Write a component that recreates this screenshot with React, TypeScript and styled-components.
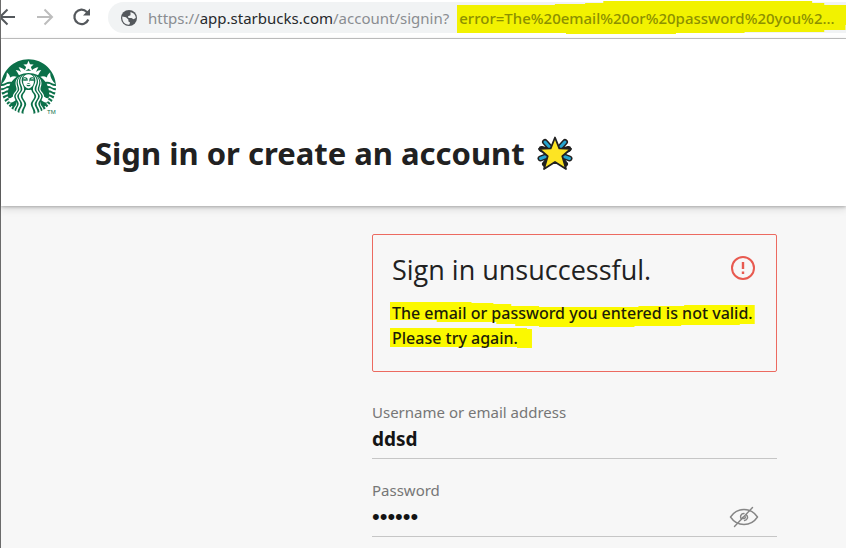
import React, { useId } from 'react';
import styled, { createGlobalStyle } from 'styled-components';
import { SiStarbucks } from 'react-icons/si';

const GlobalStyle = createGlobalStyle`
  *, *::before, *::after { box-sizing: border-box; }
  body {
    margin: 0;
    background: #f7f7f7;
    color: #212121;
    font-family: "Noto Sans", "Open Sans", sans-serif;
    overflow: hidden;
  }
`;

const Page = styled.div`
  min-height: 100vh;
  border-left: 1px solid #6b6b6b;
`;

const BrowserBar = styled.div`
  display: flex;
  align-items: center;
  height: 39px;
  padding-bottom: 5px;
  background: #fff;
  border-bottom: 1px solid #c8c8c8;
  overflow: hidden;
`;

const NavButtons = styled.div`
  display: flex;
  flex: none;
  gap: 14px;
  width: 107px;
`;

const NavButton = styled.button<{ $muted?: boolean }>`
  display: flex;
  flex: none;
  width: 24px;
  height: 24px;
  padding: 0;
  border: 0;
  background: none;
  color: ${(p) => (p.$muted ? '#bdbdbd' : '#54585c')};

  &:first-child { margin-left: -9px; }
`;

const AddressBar = styled.div`
  display: flex;
  flex: 1;
  align-items: center;
  height: 31px;
  margin-top: 2px;
  padding-left: 12px;
  border-radius: 16px 0 0 16px;
  background: #f1f3f4;
  white-space: nowrap;
`;

const GlobeIcon = styled.svg`
  flex: none;
  width: 18px;
  height: 18px;
  margin-right: 10px;
`;

const Url = styled.div`
  display: flex;
  gap: 10px;
  font-size: 15px;
  line-height: 30px;
  color: #8a8d91;
`;

const Host = styled.span`
  color: #26292c;
`;

const Highlight = styled.mark<{ $faded?: boolean }>`
  position: relative;
  isolation: isolate;
  display: inline-block;
  background: none;
  color: ${(p) => (p.$faded ? '#8c9000' : '#1d1d08')};
  font-weight: 500;
`;

const Stroke = styled.svg<{ $top: number; $height: number; $bleed: number }>`
  position: absolute;
  z-index: -1;
  left: -2px;
  top: ${(p) => p.$top}px;
  width: calc(100% + ${(p) => p.$bleed}px);
  height: ${(p) => p.$height}px;
`;

const Header = styled.header`
  position: relative;
  height: 167px;
  padding-top: 20px;
  background: #fff;
  box-shadow: 0 1px 3px rgba(0, 0, 0, 0.25), 0 3px 8px rgba(0, 0, 0, 0.12);
`;

const LogoLink = styled.a`
  display: flex;
  width: 56px;
  height: 56px;
  color: #0b7049;
`;

const Trademark = styled.text`
  font: 6px "Liberation Sans", sans-serif;
`;

const Heading = styled.h1`
  display: flex;
  align-items: center;
  gap: 12px;
  margin: 16px 0 0 94px;
  font-size: 31px;
  line-height: 44px;
  white-space: nowrap;
`;

const StarIcon = styled.svg`
  width: 36px;
  height: 36px;
`;

const SignInForm = styled.form`
  width: 100%;
  max-width: 474px;
  margin-left: auto;
  padding: 28px 69px 0 0;
`;

const Alert = styled.section`
  padding: 16px 18px 20px 19px;
  border: 1px solid #ec6a60;
  border-radius: 2px;
`;

const AlertHeader = styled.div`
  display: flex;
  align-items: flex-start;
  justify-content: space-between;
  height: 38px;
  padding-right: 2px;
`;

const AlertTitle = styled.h2`
  margin: 0;
  font: 400 27px/38px "Open Sans", sans-serif;
`;

const AlertIcon = styled.svg`
  width: 26px;
  height: 26px;
  margin-top: 4px;
`;

const AlertText = styled.p`
  margin: 12px 0 0;
  font-size: 16px;
  line-height: 25px;
  white-space: nowrap;
`;

const Field = styled.div`
  display: flex;
  flex-direction: column;
  height: 58px;
  margin-top: 20px;
  border-bottom: 1px solid #c6c6c6;

  ${Alert} + & { margin-top: 29px; }
`;

const Label = styled.label`
  font-size: 15px;
  line-height: 22px;
  color: #767676;
`;

const FieldRow = styled.div`
  display: flex;
  align-items: center;
  height: 32px;
`;

const TextInput = styled.input`
  flex: 1;
  min-width: 0;
  height: 32px;
  padding: 0;
  border: 0;
  outline: 0;
  background: none;
  color: #141414;
  font: 700 19px/32px "Noto Sans", sans-serif;

  &[type='password'] { font: 400 22px/32px "Liberation Sans", sans-serif; }
`;

const RevealButton = styled.button`
  display: flex;
  margin-right: 18px;
  padding: 0;
  border: 0;
  background: none;
  color: #858585;
`;

function UsernameField() {
  const id = useId();
  return (
    <Field>
      <Label htmlFor={id}>Username or email address</Label>
      <FieldRow>
        <TextInput id={id} type="text" defaultValue="ddsd" />
      </FieldRow>
    </Field>
  );
}

function PasswordField() {
  const id = useId();
  return (
    <Field>
      <Label htmlFor={id}>Password</Label>
      <FieldRow>
        <TextInput id={id} type="password" defaultValue="secret" />
        <RevealButton type="button" aria-label="Show password">
          <svg width="30" height="22" viewBox="0 0 30 22" fill="none" stroke="currentColor" strokeWidth="1.4" strokeLinecap="round">
            <path d="M1.5 11C5 5.8 9.5 3.5 15 3.5S25 5.8 28.5 11C25 16.2 20.5 18.5 15 18.5S5 16.2 1.5 11Z" />
            <path d="M12.500 13.500C10.500 10.500 12 7.500 15 7.500M15.500 14.500C18.500 14 19.500 11 17.500 9M13.500 11.500c.4 1.600 2.600 1.600 3-.5M5.500 20.500 23.500 1.500" />
          </svg>
        </RevealButton>
      </FieldRow>
    </Field>
  );
}

export default function App() {
  return (
    <Page>
      <GlobalStyle />
      <BrowserBar>
        <NavButtons>
          <NavButton type="button" aria-label="Back">
            <svg width="24" height="24" viewBox="0 0 24 24" fill="none" stroke="currentColor" strokeWidth="2">
              <path d="M23 12H8M15.500 4.500 8 12l7.500 7.500" />
            </svg>
          </NavButton>
          <NavButton type="button" aria-label="Forward" $muted>
            <svg width="24" height="24" viewBox="0 0 24 24" fill="none" stroke="currentColor" strokeWidth="2">
              <path d="M7 12h15M14.500 4.500 22 12l-7.500 7.500" />
            </svg>
          </NavButton>
          <NavButton type="button" aria-label="Reload">
            <svg width="24" height="24" viewBox="0 0 24 24" fill="none" stroke="currentColor" strokeWidth="2.200">
              <path d="M20.300 14.500A7.200 7.200 0 1 1 18.800 6.900L20.500 8.800" />
              <path d="M22 3.500v7h-7z" fill="currentColor" stroke="none" />
            </svg>
          </NavButton>
        </NavButtons>
        <AddressBar>
          <GlobeIcon viewBox="0 0 18 18">
            <circle cx="9" cy="9" r="8" fill="#54585c" />
            <path d="M2.300 7.500 6 8.300 8.300 10.500 8.500 12.500 10 13.500 9.500 15.600C4.500 16 1.800 12 2.300 7.500ZM10.500 3l2.800 1.200C15 5.500 15.800 7 15.800 9L13.500 10.300 11.500 9H8.500L8 7.300 10.500 6.300Z" fill="#f1f3f4" />
          </GlobeIcon>
          <Url>
            <span>https://<Host>app.starbucks.com</Host>/account/signin?</span>
            <Highlight $faded>
              <Stroke $top={-2} $height={34} $bleed={16} viewBox="0 0 388 34" preserveAspectRatio="none" aria-hidden="true">
                <path fill="#f2f200" d="M0 4H97V3H127V2H145V0H352V2H364V4H388V24H385V29H364V31H285V32H217V33H108V32H0Z" />
              </Stroke>
              error=The%20email%20or%20password%20you%2...
            </Highlight>
          </Url>
        </AddressBar>
      </BrowserBar>

      <Header>
        <LogoLink href="#" aria-label="Starbucks">
          <svg width="56" height="56" viewBox="0 0 56 56" fill="currentColor">
            <SiStarbucks size={55} />
            <Trademark x="46" y="55">TM</Trademark>
          </svg>
        </LogoLink>
        <Heading>
          Sign in or create an account
          <StarIcon viewBox="0 0 36 36" aria-hidden="true">
            <g strokeLinecap="round">
              <path d="M8 7 28 29M28 7 8 29M3.500 23.500 18 18 32.500 23.500M4.500 14 18 18 31.500 14" fill="none" stroke="#212121" strokeWidth="6" />
              <path d="M8 7 18 18 28 7M3.500 23.500 18 18 32.500 23.500" fill="none" stroke="#25a5d0" strokeWidth="3" />
            </g>
            <path d="M18 2.500 22.300 13.300 34 13.800 25.300 21.300 29 34 18 27 7 34 10.700 21.300 2 13.800 13.700 13.300Z" fill="#fde423" stroke="#212121" strokeWidth="1.800" strokeLinejoin="round" />
          </StarIcon>
        </Heading>
      </Header>

      <SignInForm>
        <Alert role="alert">
          <AlertHeader>
            <AlertTitle>Sign in unsuccessful.</AlertTitle>
            <AlertIcon viewBox="0 0 26 26" fill="none" stroke="#e85a50" strokeWidth="2" aria-hidden="true">
              <circle cx="13" cy="13" r="11" />
              <path d="M13 7v7M13 16.500v2.500" strokeWidth="2.400" />
            </AlertIcon>
          </AlertHeader>
          <AlertText>
            <Highlight>
              <Stroke $top={1} $height={25} $bleed={4} viewBox="0 0 367 25" preserveAspectRatio="none" aria-hidden="true">
                <path fill="#fbf900" d="M0 0H82V1H104V2H122V4H150V5H250V4H296V3H367V22H352V23H293V24H246V25H150V24H126V22H107V20H47V18H0Z" />
              </Stroke>
              The email or password you entered is not valid.
            </Highlight>
            <br />
            <Highlight>
              <Stroke $top={2} $height={20} $bleed={16} viewBox="0 0 143 20" preserveAspectRatio="none" aria-hidden="true">
                <path fill="#fbf900" d="M0 0H138V1H143V20H128V19H0Z" />
              </Stroke>
              Please try again.
            </Highlight>
          </AlertText>
        </Alert>
        <UsernameField />
        <PasswordField />
      </SignInForm>
    </Page>
  );
}
